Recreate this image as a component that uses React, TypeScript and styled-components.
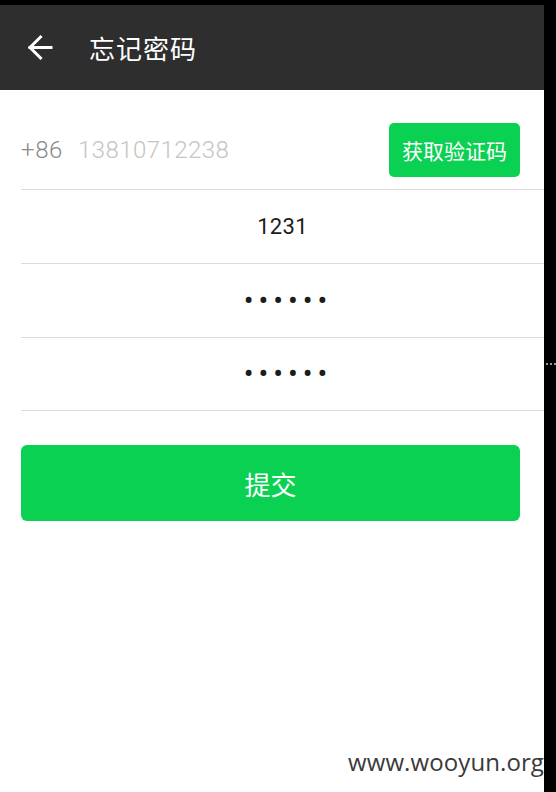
import { createGlobalStyle } from 'styled-components'
import styled from 'styled-components'

const GlobalStyle = createGlobalStyle`
  html, body {
    margin: 0;
    padding: 0;
    background: #000;
  }
  body {
    font-family: Roboto, "Noto Sans CJK SC", sans-serif;
  }
`

const Page = styled.div`
  display: flex;
  width: 556px;
  height: 792px;
  background: #000;
  overflow: hidden;
`
const Screen = styled.div`
  position: relative;
  display: flex;
  flex-direction: column;
  width: 544px;
  margin-top: 5px;
  background: #fff;
  overflow: hidden;
`
const Gutter = styled.div`
  flex: 1;
  padding-top: 363px;
`
const ScrollMark = styled.div`
  margin-left: 2px;
  height: 2px;
  background-image: linear-gradient(to right, #9a9a9a 50%, transparent 50%);
  background-size: 4px 2px;
`
const Header = styled.div`
  display: flex;
  align-items: center;
  height: 85px;
  padding-left: 27px;
  background: #2e2e2e;
`
const BackButton = styled.button`
  display: flex;
  align-items: center;
  justify-content: center;
  width: 27px;
  height: 27px;
  padding: 0;
  border: none;
  background: none;
  cursor: pointer;
`
const Title = styled.h1`
  margin: 0 0 0 35px;
  font-size: 26px;
  font-weight: 400;
  color: #fff;
  letter-spacing: 1px;
`
const Form = styled.div`
  display: flex;
  flex-direction: column;
  padding: 20px 0 0 21px;
`
const Row = styled.div<{ $height: number }>`
  display: flex;
  align-items: center;
  height: ${({ $height }) => $height}px;
  border-bottom: 1px solid #dcdcdc;
`
const Prefix = styled.span`
  font-size: 24px;
  font-weight: 300;
  color: #8a8a8a;
  letter-spacing: 0.6px;
`
const PhoneInput = styled.span`
  flex: 1;
  margin-left: 15px;
  font-size: 24px;
  font-weight: 300;
  color: #c4c4c4;
  letter-spacing: 0.45px;
`
const CodeButton = styled.button`
  width: 131px;
  height: 54px;
  margin-right: 24px;
  border: none;
  border-radius: 5px;
  background: #0ad152;
  color: #fff;
  font-family: inherit;
  font-size: 21px;
  padding: 0;
`
const FieldValue = styled.span<{ $masked?: boolean }>`
  flex: 1;
  text-align: center;
  font-size: ${({ $masked }) => ($masked ? '29px' : '22px')};
  letter-spacing: ${({ $masked }) => ($masked ? '5px' : '0.3px')};
  color: #1c1c1c;
  padding-left: ${({ $masked }) => ($masked ? '11px' : '0')};
`
const Submit = styled.button`
  height: 76px;
  margin: 34px 24px 0 0;
  border: none;
  border-radius: 6px;
  background: #0ad152;
  color: #fff;
  font-family: inherit;
  font-size: 26px;
  padding: 0;
`
const Watermark = styled.div`
  position: absolute;
  right: 0;
  bottom: 14px;
  font-family: "Open Sans", "DejaVu Sans", sans-serif;
  font-size: 24px;
  color: #3a3a3a;
  letter-spacing: 0.1px;
`

const BackArrow = () => (
  <svg width="27" height="27" viewBox="0 0 27 27" fill="none" stroke="#fff" strokeWidth="3" strokeLinecap="square">
    <path d="M3 13.5h21" />
    <path d="M13.5 3 3 13.5 13.5 24" />
  </svg>
)

export default function App() {
  return (
    <Page>
      <GlobalStyle />
      <Screen>
        <Header>
          <BackButton>
            <BackArrow />
          </BackButton>
          <Title>忘记密码</Title>
        </Header>
        <Form>
          <Row $height={79}>
            <Prefix>+86</Prefix>
            <PhoneInput>13810712238</PhoneInput>
            <CodeButton>获取验证码</CodeButton>
          </Row>
          <Row $height={73}>
            <FieldValue>1231</FieldValue>
          </Row>
          <Row $height={73}>
            <FieldValue $masked>••••••</FieldValue>
          </Row>
          <Row $height={72}>
            <FieldValue $masked>••••••</FieldValue>
          </Row>
          <Submit>提交</Submit>
        </Form>
        <Watermark>www.wooyun.org</Watermark>
      </Screen>
      <Gutter>
        <ScrollMark />
      </Gutter>
    </Page>
  )
}
